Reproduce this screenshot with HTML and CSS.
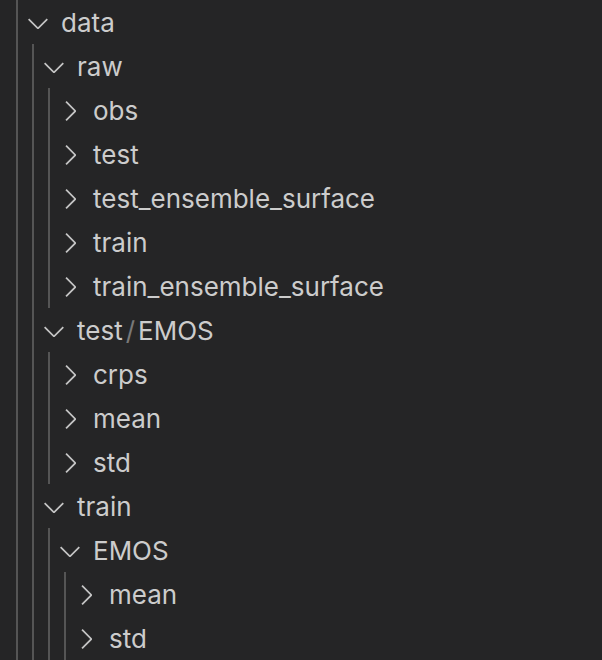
FILE: index.html
```html
<!DOCTYPE html>
<html>
<head>
<meta charset="utf-8">
<link rel="stylesheet" href="styles.css">
</head>
<body>
<svg width="0" height="0" class="defs">
  <defs>
    <path id="down" d="M7.976 10.072l4.357-4.357.62.618L8.284 11h-.618L3 6.333l.619-.618 4.357 4.357z"/>
    <path id="right" d="M10.072 8.024L5.715 3.667l.618-.62L11 7.716v.618L6.333 13l-.618-.619 4.357-4.357z"/>
  </defs>
</svg>
<div class="tree">
  <div class="row"><span class="guide"></span><svg class="tw" viewBox="0 0 16 16"><use href="#down"/></svg><span class="label">data</span></div>
  <div class="row"><span class="guide"></span><span class="guide"></span><svg class="tw" viewBox="0 0 16 16"><use href="#down"/></svg><span class="label">raw</span></div>
  <div class="row"><span class="guide"></span><span class="guide"></span><span class="guide"></span><svg class="tw" viewBox="0 0 16 16"><use href="#right"/></svg><span class="label">obs</span></div>
  <div class="row"><span class="guide"></span><span class="guide"></span><span class="guide"></span><svg class="tw" viewBox="0 0 16 16"><use href="#right"/></svg><span class="label">test</span></div>
  <div class="row"><span class="guide"></span><span class="guide"></span><span class="guide"></span><svg class="tw" viewBox="0 0 16 16"><use href="#right"/></svg><span class="label">test_ensemble_surface</span></div>
  <div class="row"><span class="guide"></span><span class="guide"></span><span class="guide"></span><svg class="tw" viewBox="0 0 16 16"><use href="#right"/></svg><span class="label">train</span></div>
  <div class="row"><span class="guide"></span><span class="guide"></span><span class="guide"></span><svg class="tw" viewBox="0 0 16 16"><use href="#right"/></svg><span class="label">train_ensemble_surface</span></div>
  <div class="row"><span class="guide"></span><span class="guide"></span><svg class="tw" viewBox="0 0 16 16"><use href="#down"/></svg><span class="label">test<span class="sep">/</span>EMOS</span></div>
  <div class="row"><span class="guide"></span><span class="guide"></span><span class="guide"></span><svg class="tw" viewBox="0 0 16 16"><use href="#right"/></svg><span class="label">crps</span></div>
  <div class="row"><span class="guide"></span><span class="guide"></span><span class="guide"></span><svg class="tw" viewBox="0 0 16 16"><use href="#right"/></svg><span class="label">mean</span></div>
  <div class="row"><span class="guide"></span><span class="guide"></span><span class="guide"></span><svg class="tw" viewBox="0 0 16 16"><use href="#right"/></svg><span class="label">std</span></div>
  <div class="row"><span class="guide"></span><span class="guide"></span><svg class="tw" viewBox="0 0 16 16"><use href="#down"/></svg><span class="label">train</span></div>
  <div class="row"><span class="guide"></span><span class="guide"></span><span class="guide"></span><svg class="tw" viewBox="0 0 16 16"><use href="#down"/></svg><span class="label">EMOS</span></div>
  <div class="row"><span class="guide"></span><span class="guide"></span><span class="guide"></span><span class="guide"></span><svg class="tw" viewBox="0 0 16 16"><use href="#right"/></svg><span class="label">mean</span></div>
  <div class="row"><span class="guide"></span><span class="guide"></span><span class="guide"></span><span class="guide"></span><svg class="tw" viewBox="0 0 16 16"><use href="#right"/></svg><span class="label">std</span></div>
</div>
</body>
</html>
```
FILE: styles.css
```css
html, body {
  margin: 0;
  padding: 0;
  background: #252526;
  overflow: hidden;
}
.defs {
  position: absolute;
  width: 0;
  height: 0;
}
.tree {
  display: flex;
  flex-direction: column;
  font-family: Inter, "Noto Sans", sans-serif;
  font-size: 26px;
  color: #cccccc;
}
.row {
  display: flex;
  align-items: center;
  height: 44px;
  padding-left: 16px;
}
.guide {
  flex: none;
  width: 16px;
  height: 44px;
  box-sizing: border-box;
  border-left: 2px solid #555555;
}
.tw {
  flex: none;
  width: 32px;
  height: 32px;
  margin-left: -10px;
  margin-top: 1px;
  fill: #c5c5c5;
}
.label {
  margin-left: 7px;
  padding-top: 2px;
  line-height: 42px;
  white-space: nowrap;
}
.sep {
  margin: 0 3px;
  opacity: 0.5;
}
```
